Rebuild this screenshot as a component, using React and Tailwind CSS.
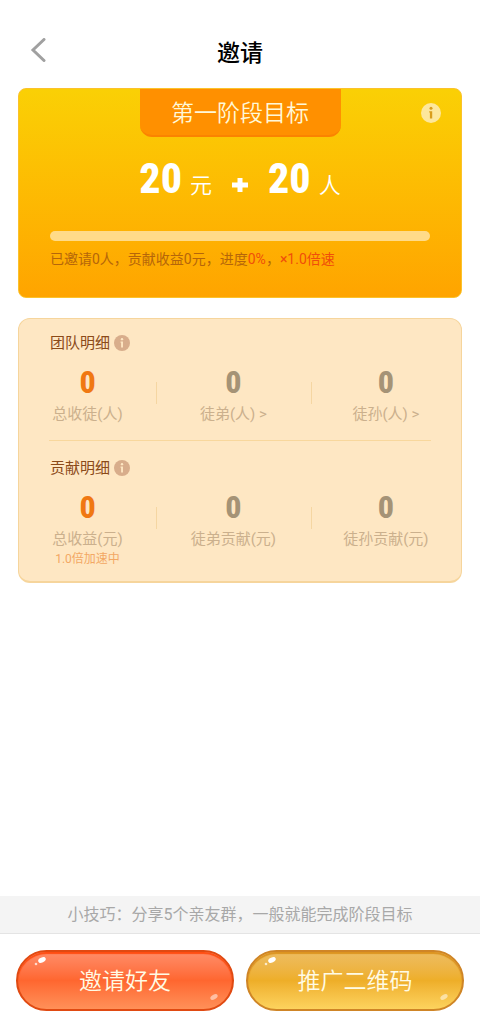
import { clsx } from "clsx";

const team = [
  { label: "总收徒(人)", value: 0, highlight: true },
  { label: "徒弟(人) >", value: 0, href: "#tudi" },
  { label: "徒孙(人) >", value: 0, href: "#tusun" },
];

const contribution = [
  { label: "总收益(元)", value: 0, highlight: true, note: "1.0倍加速中" },
  { label: "徒弟贡献(元)", value: 0 },
  { label: "徒孙贡献(元)", value: 0 },
];

const numberFont = "font-['Roboto_Condensed',Roboto,sans-serif] font-extrabold";

function InfoButton({ label, className, dot }) {
  return (
    <button type="button" aria-label={label} className={className}>
      <svg viewBox="0 0 20 20" className="size-full" aria-hidden="true">
        <circle cx="10" cy="10" r="10" fill="currentColor" />
        <circle cx="10" cy="5.2" r="1.5" fill={dot} />
        <path d="M8.2 8.2h3v7.3H8.9V9.6h-.7z" fill={dot} />
      </svg>
    </button>
  );
}

function Stat({ label, value, highlight, note, href, divided }) {
  const Label = href ? "a" : "span";
  return (
    <li className="relative flex flex-col items-center">
      {divided && (
        <span className="absolute top-4 left-0 h-[22px] w-px bg-[#f5d6a2]" />
      )}
      <span
        className={clsx(
          numberFont,
          "text-[32px] leading-8",
          highlight ? "text-[#f07812]" : "text-[#a59376]",
        )}
      >
        {value}
      </span>
      <Label
        href={href}
        className="mt-1.5 text-[15px] leading-5 whitespace-pre text-[#cbb08d]"
      >
        {label}
      </Label>
      {note && (
        <span className="text-xs leading-5 text-[#f3a864]">{note}</span>
      )}
    </li>
  );
}

function Details({ title, items }) {
  return (
    <section>
      <div className="flex items-center gap-1 px-[31px]">
        <h2 className="text-[15px] leading-6 text-[#8b4a18]">{title}</h2>
        <InfoButton
          label={`${title}说明`}
          className="size-4 text-[#d8ad8b]"
          dot="#fee7c3"
        />
      </div>
      <ul className="mt-[11px] grid grid-cols-[31fr_35fr_34fr]">
        {items.map((item, i) => (
          <Stat key={item.label} {...item} divided={i > 0} />
        ))}
      </ul>
    </section>
  );
}

function GlossyButton({ children, className }) {
  return (
    <button
      type="button"
      className={clsx(
        "relative h-[61px] flex-1 rounded-full border-2 pt-1 text-[23px] font-[350] text-[#fffbe5]",
        className,
      )}
    >
      {children}
      <svg
        viewBox="0 0 14 10"
        className="absolute top-1 left-4 h-2.5 w-3.5"
        aria-hidden="true"
      >
        <ellipse cx="8" cy="4" rx="4" ry="2.4" fill="#fff" transform="rotate(-25 8 4)" />
        <circle cx="2" cy="8" r="1.3" fill="#fff" opacity=".7" />
      </svg>
      <svg
        viewBox="0 0 14 10"
        className="absolute right-2.5 bottom-1.5 h-2.5 w-3.5"
        aria-hidden="true"
      >
        <ellipse cx="6" cy="4" rx="4" ry="2.2" fill="#fff" opacity=".5" transform="rotate(-30 6 4)" />
      </svg>
    </button>
  );
}

export default function App() {
  return (
    <div className="flex min-h-screen flex-col bg-white font-[Roboto,'Noto_Sans_CJK_SC',sans-serif]">
      <header className="grid grid-cols-[1fr_auto_1fr] items-center px-7 pt-[34px] pb-3.5">
        <button type="button" aria-label="返回" className="mb-2 size-6 text-[#a0a0a0]">
          <svg viewBox="0 0 24 24" className="size-6" fill="none" aria-hidden="true">
            <path
              d="M16 1.500 5 12l11 10.500"
              stroke="currentColor"
              strokeWidth="3"
              strokeLinecap="round"
            />
          </svg>
        </button>
        <h1 className="text-[23px] leading-10 font-medium text-black">邀请</h1>
      </header>

      <main className="flex flex-1 flex-col gap-5 px-[18px]">
        {/* 阶段目标 */}
        <section className="relative rounded-lg border border-[#fbc22c] bg-linear-to-b from-[#fad005] to-[#ffa400] pb-7">
          <h2 className="mx-auto h-12 w-[201px] rounded-b-xl border-b-2 border-[#fb8300] bg-[#ff9000] text-center text-[23px] leading-[50px] font-[350] text-[#fff8d8]">
            第一阶段目标
          </h2>
          <InfoButton
            label="目标说明"
            className="absolute top-3.5 right-5 size-5 text-[#fde79c]"
            dot="#d99d1c"
          />
          <p className="mt-3.5 flex h-14 items-baseline justify-center text-[22px] leading-14 font-[350] text-white">
            <span className={clsx(numberFont, "text-[42px]")}>20</span>
            <span className="ml-2">元</span>
            <svg viewBox="0 0 16 16" className="mx-5 mb-1 size-4" aria-label="加">
              <path d="M5.500 1h5v4.500H16v5h-5.500V15h-5v-4.500H0v-5h5.500z" fill="#fff" />
            </svg>
            <span className={clsx(numberFont, "text-[42px]")}>20</span>
            <span className="ml-2">人</span>
          </p>
          <div className="px-[31px] pt-6">
            <div
              role="progressbar"
              aria-label="进度"
              aria-valuenow={0}
              className="h-2.5 rounded-full bg-[#ffdb89]"
            />
            <p className="mt-2 text-sm leading-5 text-[#b5660a]">
              已邀请0人，贡献收益0元，进度
              <span className="text-[#f04e0a]">0%</span>，
              <span className="text-[#f04e0a]">×1.0倍速</span>
            </p>
          </div>
        </section>

        {/* 团队与贡献 */}
        <div className="rounded-xl border border-b-2 border-[#f6d59c] bg-[#fee7c3] pt-3 pb-3">
          <Details title="团队明细" items={team} />
          <hr className="mx-[30px] mt-4 mb-[15px] border-[#f8d79c]" />
          <Details title="贡献明细" items={contribution} />
        </div>
      </main>

      <footer>
        <p className="border-b border-[#e4e4e4] bg-[#f4f4f4] text-center text-base leading-[37px] text-[#a8a8a8]">
          小技巧：分享5个亲友群，一般就能完成阶段目标
        </p>
        <div className="flex gap-3 px-4 pt-4 pb-[15px]">
          <GlossyButton className="border-[#e04a12] bg-linear-to-b from-[#ff8d68] via-[#ff662f] to-[#ff9058] shadow-[inset_0_2px_1px_#ff4d12]">
            邀请好友
          </GlossyButton>
          <GlossyButton className="border-[#cf8526] bg-linear-to-b from-[#edbd60] via-[#eeae28] to-[#fdd35d] shadow-[inset_0_2px_1px_#dc9420]">
            推广二维码
          </GlossyButton>
        </div>
      </footer>
    </div>
  );
}
